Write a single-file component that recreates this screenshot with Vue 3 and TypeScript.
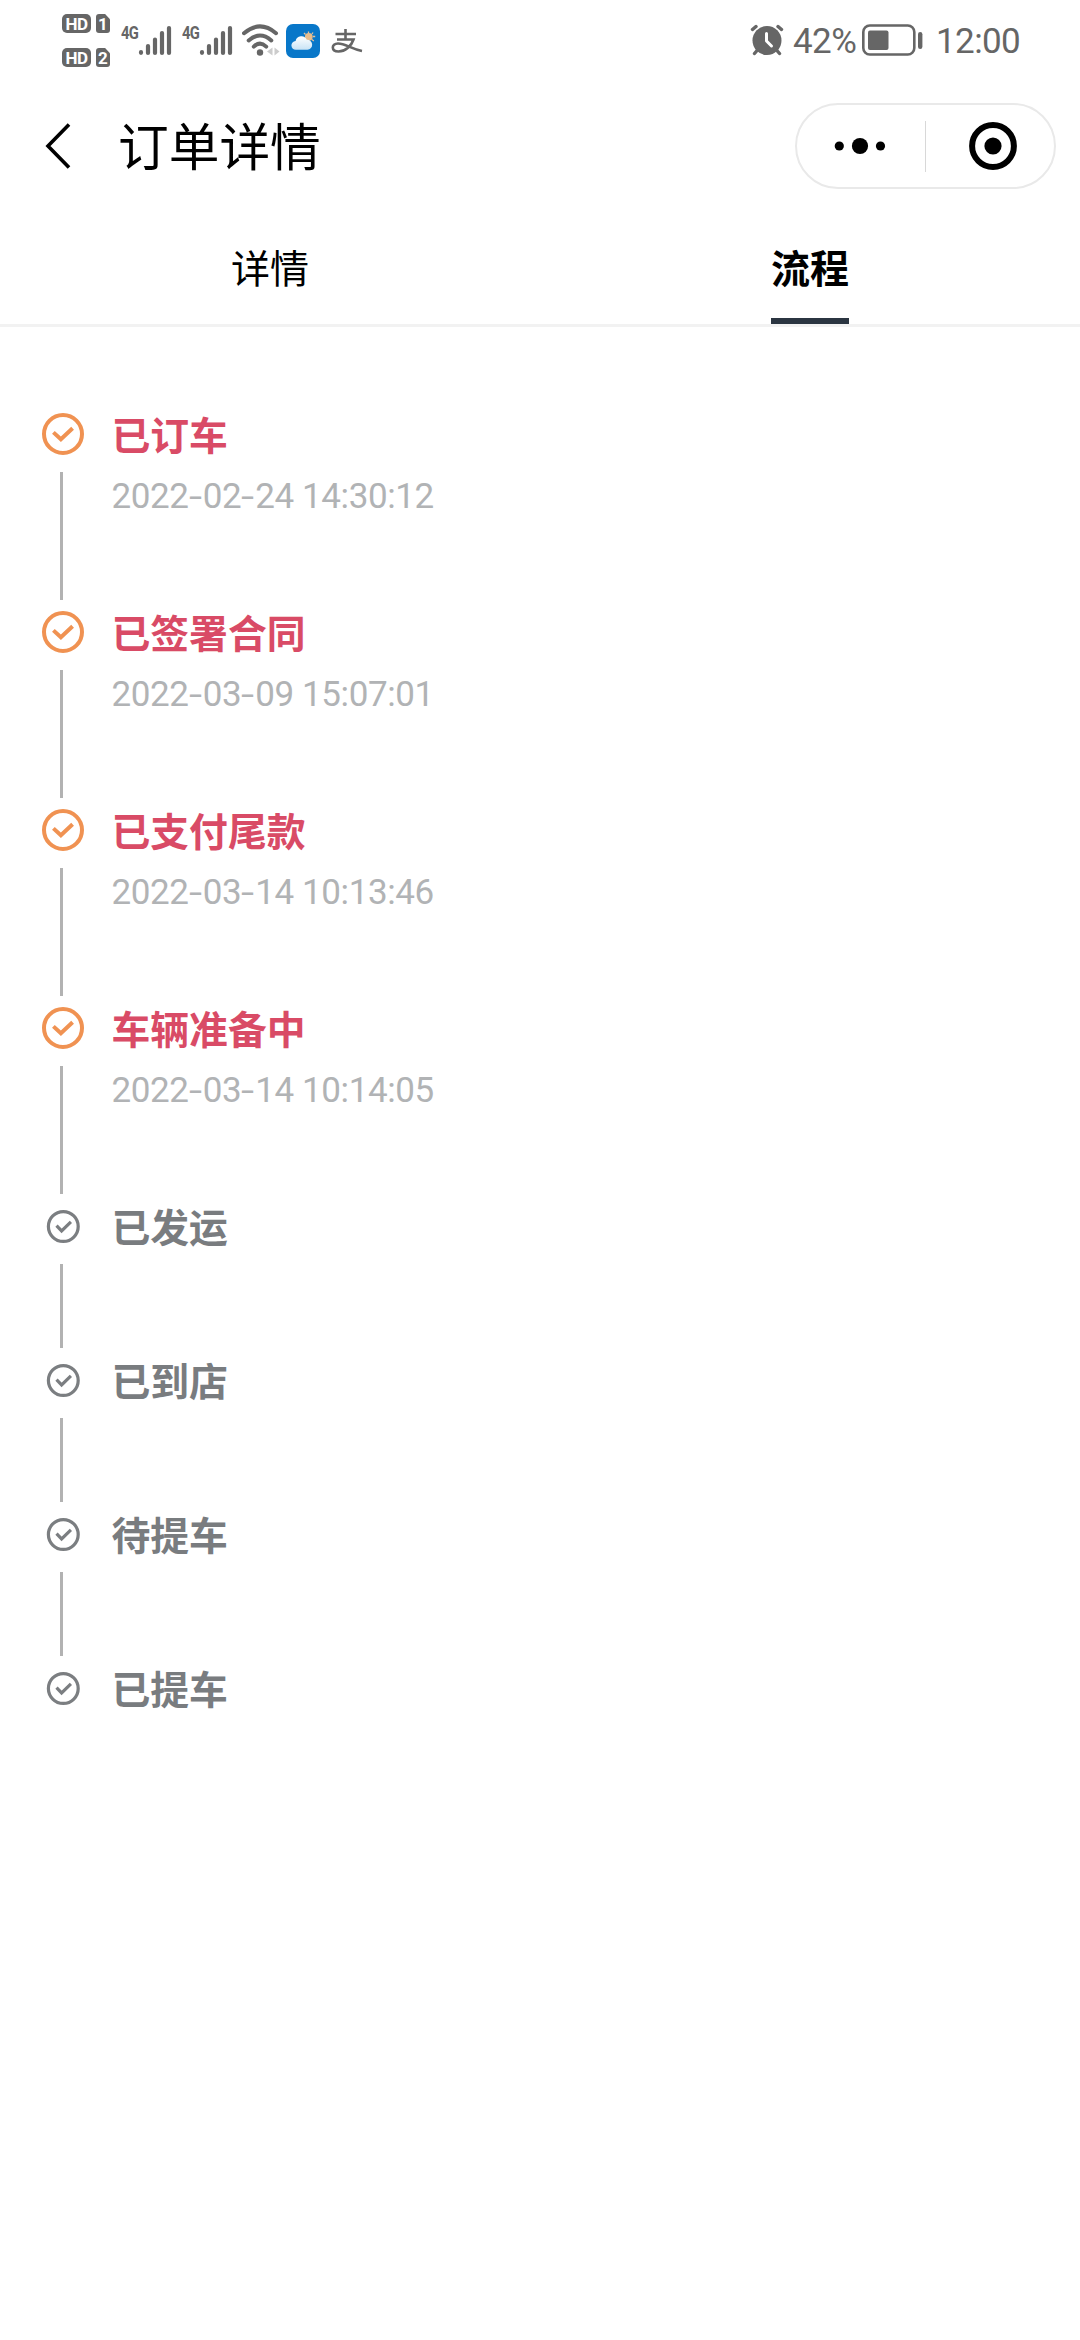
<script setup lang="ts">
interface Step {
  title: string
  time?: string
  done: boolean
}

const steps: Step[] = [
  { title: '已订车', time: '2022-02-24 14:30:12', done: true },
  { title: '已签署合同', time: '2022-03-09 15:07:01', done: true },
  { title: '已支付尾款', time: '2022-03-14 10:13:46', done: true },
  { title: '车辆准备中', time: '2022-03-14 10:14:05', done: true },
  { title: '已发运', done: false },
  { title: '已到店', done: false },
  { title: '待提车', done: false },
  { title: '已提车', done: false },
]

const sims = [1, 2]
</script>

<template>
  <div class="page">
    <header class="status">
      <div class="hd-stack">
        <div v-for="n in sims" :key="n" class="hd-row">
          <span class="hd">HD</span>
          <span class="sim">{{ n }}</span>
        </div>
      </div>
      <div v-for="n in sims" :key="n" class="signal">
        <span class="net">4G</span>
        <svg width="34" height="32" viewBox="0 0 34 32" stroke="#666" stroke-width="4.200" stroke-linecap="round">
          <path d="M3 28.2V28.8M10 22V29M17 15.5V29M24 9V29M31 4V29" />
        </svg>
      </div>
      <svg class="wifi" width="38" height="34" viewBox="0 0 38 34" fill="none" stroke="#666" stroke-width="4" stroke-linecap="round">
        <path d="M2 9.2Q18 -4.4 34 9.2M6.7 16.4Q18 6.6 29.3 16.4M11.8 22.6Q18 16.8 24.2 22.6" />
        <circle cx="18" cy="28.5" r="3.2" fill="#666" stroke="none" />
        <path d="M30.500 23.500V31.500L25 27.500ZM32.500 23.500V31.500L37.500 27.500Z" fill="#ccc" stroke="none" />
      </svg>
      <svg class="weather" width="34" height="34" viewBox="0 0 34 34">
        <defs>
          <linearGradient id="cloud" x1="0" y1="0" x2="0" y2="1">
            <stop offset="0" stop-color="#fff" />
            <stop offset="1" stop-color="#c8e3f5" />
          </linearGradient>
        </defs>
        <rect width="34" height="34" rx="7" fill="#0877c9" />
        <path d="M22.500 7.500v2M27 8.500l-1 1.500M18 9l1.500 1.500M27 12.500h2.200M26 15.500l1.800 1.500" stroke="#e2c19d" stroke-width="1.300" />
        <circle cx="22.800" cy="12.800" r="3.900" fill="#e9bd8c" />
        <path d="M10 25.800a4.400 4.400 0 0 1-.4-8.800a5.900 5.900 0 0 1 11.200-1.200a5 5 0 0 1 .7 10Z" fill="url(#cloud)" />
      </svg>
      <svg class="pay" width="32" height="26" viewBox="0 0 32 26" fill="none" stroke="#666" stroke-width="2.600">
        <path d="M4.500 5H25M14.500 0V10.500M6 10.500H22.500C20.500 17 14 22.500 7.500 22.500C0 22.500 0 14.500 7 14.500C14.500 14.500 20 20 31 22" />
      </svg>
      <div class="spacer"></div>
      <svg class="alarm" width="34" height="32" viewBox="0 0 34 32" fill="none" stroke-linecap="round">
        <circle cx="17" cy="16.500" r="14.500" fill="#666" />
        <path d="M2.500 5.500L6 2.500M31.500 5.500L28 2.500M7.500 26L4.500 29.500M26.500 26L29.500 29.500" stroke="#666" stroke-width="3.400" />
        <path d="M16.500 9.500V17L21.500 22" stroke="#fff" stroke-width="3" stroke-linejoin="round" />
      </svg>
      <span class="percent">42%</span>
      <svg class="battery" width="62" height="32" viewBox="0 0 62 32">
        <rect x="1.300" y="1.500" width="51" height="29" rx="6.500" fill="none" stroke="#666" stroke-width="2.600" />
        <rect x="6" y="6.500" width="20.500" height="19.500" rx="2" fill="#666" />
        <rect x="56" y="8" width="4.400" height="17" rx="2.200" fill="#666" />
      </svg>
      <span class="clock">12:00</span>
    </header>

    <nav class="navbar">
      <svg class="back" width="26" height="48" viewBox="0 0 26 48" fill="none" stroke="#000" stroke-width="3.600">
        <path d="M24 2.500L3 24L24 45.500" />
      </svg>
      <h1>订单详情</h1>
      <div class="capsule">
        <svg class="dots" width="52" height="18" viewBox="0 0 52 18">
          <circle cx="5.300" cy="9" r="4.600" />
          <circle cx="26" cy="9" r="8.100" />
          <circle cx="46.500" cy="9" r="4.600" />
        </svg>
        <i class="divider"></i>
        <svg class="target" width="48" height="48" viewBox="0 0 48 48">
          <circle cx="24" cy="24" r="20.900" fill="none" stroke="#000" stroke-width="6" />
          <circle cx="24" cy="24" r="8.600" />
        </svg>
      </div>
    </nav>

    <div class="tabs">
      <div class="tab"><span>详情</span></div>
      <div class="tab active"><span>流程</span></div>
    </div>

    <ol class="timeline">
      <li v-for="step in steps" :key="step.title" :class="{ done: step.done }">
        <div class="rail">
          <svg v-if="step.done" width="44" height="44" viewBox="-22 -22 44 44" fill="none" stroke="#f09252" stroke-width="4">
            <circle r="19" />
            <path d="M-9.600 -1.600L-2.100 5.300L9.600 -5.700" />
          </svg>
          <svg v-else width="44" height="44" viewBox="-22.300 -22.500 44 44" fill="none" stroke="#7b7e81" stroke-width="3.200">
            <circle r="14.900" />
            <path d="M-6.800 -.8L-1.700 4.400L7.600 -4.600" />
          </svg>
          <i class="line"></i>
        </div>
        <div class="body">
          <div class="title">{{ step.title }}</div>
          <div v-if="step.time" class="time"><span v-for="(ch, i) in step.time" :key="i" :class="{ dash: ch === '-' }">{{ ch }}</span></div>
        </div>
      </li>
    </ol>
  </div>
</template>

<style>
body {
  margin: 0;
  background: #fff;
}
</style>

<style scoped>
.page {
  width: 1080px;
  height: 2340px;
  overflow: hidden;
  background: #fff;
  color: #000;
  font-family: Roboto, "Noto Sans CJK SC", sans-serif;
}
.status {
  display: flex;
  align-items: flex-start;
  height: 80px;
  color: #666;
}
.hd-stack {
  display: flex;
  flex-direction: column;
  gap: 15px;
  margin: 14px 0 0 62px;
}
.hd-row {
  display: flex;
  gap: 5px;
  height: 19px;
}
.hd,
.sim {
  background: #666;
  color: #fff;
  font-size: 17px;
  font-weight: 700;
  line-height: 20px;
  text-align: center;
}
.hd {
  width: 29px;
  border-radius: 5px;
  letter-spacing: -0.5px;
}
.sim {
  width: 14px;
  border-radius: 3px;
  clip-path: polygon(0 0, 65% 0, 100% 28%, 100% 100%, 0 100%);
}
.signal {
  display: flex;
  width: 51px;
  margin: 24px 0 0 11px;
}
.signal + .signal {
  margin-left: 10px;
}
.net {
  width: 17px;
  font-size: 18px;
  font-weight: 700;
  line-height: 17px;
  letter-spacing: -1px;
  transform: scaleX(0.82);
  transform-origin: left;
}
.signal svg {
  flex: none;
}
.wifi {
  margin: 24px 0 0 9px;
}
.weather {
  margin: 24px 0 0 6px;
}
.pay {
  margin: 29px 0 0 11px;
}
.spacer {
  flex: 1;
}
.alarm {
  margin: 24px 9px 0 0;
}
.percent,
.clock {
  font-size: 35px;
  line-height: 40px;
  margin-top: 22px;
  white-space: nowrap;
}
.percent {
  width: 69px;
  letter-spacing: -0.6px;
}
.battery {
  margin-top: 24px;
}
.clock {
  width: 82px;
  margin-left: 12px;
  margin-right: 62px;
  letter-spacing: -0.6px;
}
.navbar {
  display: flex;
  align-items: center;
  height: 132px;
  box-sizing: border-box;
  padding: 0 24px 0 45px;
}
.back {
  flex: none;
}
h1 {
  margin: 5px 0 0 47px;
  flex: 1;
  font-size: 50.7px;
  font-weight: 400;
  line-height: 76px;
}
.capsule {
  display: flex;
  align-items: center;
  width: 261px;
  height: 86px;
  box-sizing: border-box;
  border: 2px solid #e9e9e9;
  border-radius: 43px;
}
.dots {
  margin-left: 37px;
}
.divider {
  width: 1px;
  height: 51px;
  margin-left: 39px;
  background: #d8d8d8;
}
.target {
  margin-left: 43px;
}
.tabs {
  display: flex;
  height: 112px;
  border-bottom: 3px solid #f2f2f2;
}
.tab {
  display: flex;
  flex: 1;
  justify-content: center;
}
.tab span {
  height: 106px;
  font-size: 39px;
  line-height: 116px;
}
.active span {
  font-weight: 700;
  border-bottom: 6px solid #2b3541;
}
.timeline {
  list-style: none;
  margin: 75px 0 0;
  padding: 0 0 0 41px;
}
li {
  display: flex;
  height: 154px;
}
li.done {
  height: 198px;
}
.rail {
  display: flex;
  flex-direction: column;
  width: 44px;
  padding-top: 10px;
  box-sizing: border-box;
}
.rail svg {
  flex: none;
}
.line {
  flex: 1;
  width: 3px;
  margin: 16px 0 0 19px;
  background: #b2b2b2;
}
li:last-child .line {
  display: none;
}
.body {
  margin-left: 26.5px;
}
.title {
  font-size: 38.8px;
  font-weight: 700;
  line-height: 56px;
  margin-top: 7px;
  color: #797c7f;
}
.done .title {
  color: #d94b66;
}
.time {
  display: flex;
  margin-top: 12px;
  color: #b1b3b5;
  font-size: 35px;
  line-height: 40px;
  letter-spacing: -0.4px;
  white-space: pre;
}
.dash {
  width: 14px;
  transform: scaleX(1.35);
  transform-origin: left;
}
</style>
